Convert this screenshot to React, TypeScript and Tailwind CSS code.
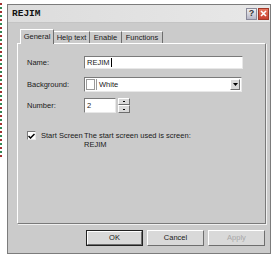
import React from "react";

function RaisedBtn({ children, className = "" }: { children?: React.ReactNode; className?: string }) {
  return (
    <div
      className={`bg-[#d9d9d9] border border-t-white border-l-white border-r-[#6e6e6e] border-b-[#6e6e6e] flex items-center justify-center ${className}`}
    >
      {children}
    </div>
  );
}

export default function App() {
  return (
    <div className="w-[276px] h-[259px] bg-white flex items-start overflow-hidden">
      <div className="w-[2px] h-[154px] mt-[3px] bg-[repeating-linear-gradient(to_bottom,#a33333_0px,#a33333_2px,#ffffff_2px,#ffffff_4px,#338855_4px,#338855_6px,#ffffff_6px,#ffffff_8px)]" />
      <div className="ml-[5px] mt-[4px] w-[264px] h-[250px] border border-[#7c7c7c] bg-[#cbcbcb] flex flex-col font-['Liberation_Sans',Arial,sans-serif] text-[7.5px] text-[#1a1a1a] leading-none">
        {/* Title bar */}
        <div className="h-[18px] bg-[linear-gradient(to_right,#dcdcdc,#e8e8e8)] flex items-center pl-[4px] pr-[1px] border-b border-[#c4c4c4]">
          <span className="font-['Liberation_Mono',monospace] font-bold text-[9.5px] text-[#111]">REJIM</span>
          <div className="ml-auto flex gap-[1px] items-center">
            <div className="w-[11px] h-[12px] bg-[linear-gradient(#f0f0f0,#b8b8c8)] border border-[#8a8a9a] flex items-center justify-center text-[9px] font-bold text-[#333] font-['Liberation_Sans',sans-serif]">
              ?
            </div>
            <div className="w-[11px] h-[12px] bg-[linear-gradient(#e87860,#c8402f)] border border-[#a03828] flex items-center justify-center">
              <svg width="7" height="7" viewBox="0 0 7 7">
                <path d="M1 1 L6 6 M6 1 L1 6" stroke="white" strokeWidth="1.6" />
              </svg>
            </div>
          </div>
        </div>

        {/* Body */}
        <div className="flex-1 flex flex-col pt-[6px] pl-[9px] pr-[4px]">
          {/* Tabs */}
          <div className="h-[14px] flex items-end pl-[3px] relative z-10">
            <div className="h-[15px] w-[34px] -mb-[1px] bg-[#cbcbcb] border-t border-l border-t-white border-l-white border-r border-r-[#6e6e6e] flex items-center justify-center">
              General
            </div>
            <div className="h-[12px] w-[36px] border-t border-t-white border-r border-r-[#6e6e6e] flex items-center justify-center">
              Help text
            </div>
            <div className="h-[12px] w-[32px] border-t border-t-white border-r border-r-[#6e6e6e] flex items-center justify-center">
              Enable
            </div>
            <div className="h-[12px] w-[41px] border-t border-t-white border-r border-r-[#6e6e6e] flex items-center justify-center">
              Functions
            </div>
          </div>

          {/* Panel */}
          <div className="h-[181px] w-[249px] border border-t-white border-l-white border-r-[#7a7a7a] border-b-[#7a7a7a] shadow-[1px_1px_0_#f0f0f0] flex flex-col pl-[9px]">
            {/* Name */}
            <div className="mt-[12px] h-[13px] flex items-center">
              <div className="w-[57px]">Name:</div>
              <div className="w-[159px] h-[13px] bg-white border border-t-[#7a7a7a] border-l-[#7a7a7a] border-r-[#e8e8e8] border-b-[#e8e8e8] flex items-center pl-[2px]">
                <span>REJIM</span>
                <span className="w-[1px] h-[9px] bg-black ml-[1px]" />
              </div>
            </div>
            {/* Background */}
            <div className="mt-[8px] h-[15px] flex items-center">
              <div className="w-[57px]">Background:</div>
              <div className="w-[158px] h-[15px] bg-white border border-t-[#7a7a7a] border-l-[#7a7a7a] border-r-[#e8e8e8] border-b-[#e8e8e8] flex items-center pl-[1px] pr-[1px]">
                <div className="w-[9px] h-[11px] bg-white border border-[#9a9a9a]" />
                <div className="w-[1px] h-[11px] bg-[#9a9a9a] ml-[1px]" />
                <span className="ml-[2px]">White</span>
                <RaisedBtn className="ml-auto w-[10px] h-[11px]">
                  <svg width="5" height="3" viewBox="0 0 5 3">
                    <path d="M0 0 L5 0 L2.5 3 Z" fill="black" />
                  </svg>
                </RaisedBtn>
              </div>
            </div>
            {/* Number */}
            <div className="mt-[6px] h-[15px] flex items-center">
              <div className="w-[57px]">Number:</div>
              <div className="w-[32px] h-[15px] bg-white border border-t-[#7a7a7a] border-l-[#7a7a7a] border-r-[#e8e8e8] border-b-[#e8e8e8] flex items-center pl-[2px]">
                2
              </div>
              <div className="ml-[2px] w-[12px] h-[15px] flex flex-col">
                <RaisedBtn className="h-[7px] w-[12px]">
                  <div className="w-[2px] h-[1px] bg-black" />
                </RaisedBtn>
                <RaisedBtn className="h-[8px] w-[12px]">
                  <div className="w-[2px] h-[1px] bg-black" />
                </RaisedBtn>
              </div>
            </div>
            {/* Start screen */}
            <div className="mt-[18px] flex items-start leading-[9px]">
              <div className="w-[57px] flex items-start">
                <div className="w-[9px] h-[9px] bg-white border border-t-[#7a7a7a] border-l-[#7a7a7a] border-r-[#e8e8e8] border-b-[#e8e8e8] flex items-center justify-center">
                  <svg width="7" height="6" viewBox="0 0 7 6">
                    <path d="M0.5 3 L2.5 5 L6.5 1" stroke="black" strokeWidth="1.5" fill="none" />
                  </svg>
                </div>
                <span className="ml-[5px]">Start Screen</span>
              </div>
              <div className="flex flex-col">
                <span>The start screen used is screen:</span>
                <span>REJIM</span>
              </div>
            </div>
          </div>

          {/* Buttons */}
          <div className="mt-[6px] flex justify-end gap-[4px] pr-[1px]">
            <div className="w-[57px] h-[16px] border border-[#222] flex">
              <RaisedBtn className="flex-1">OK</RaisedBtn>
            </div>
            <RaisedBtn className="w-[57px] h-[16px]">Cancel</RaisedBtn>
            <RaisedBtn className="w-[57px] h-[16px] text-[#a8a8a8]">Apply</RaisedBtn>
          </div>
        </div>
      </div>
    </div>
  );
}
